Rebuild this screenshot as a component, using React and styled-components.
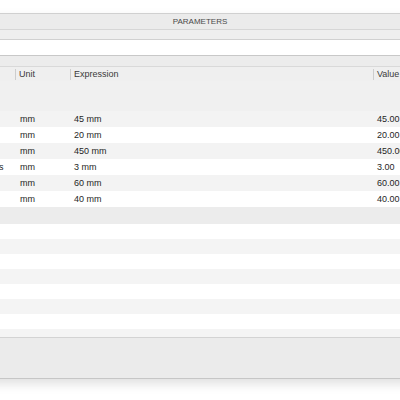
import React from "react";
import styled, { createGlobalStyle } from "styled-components";

const Global = createGlobalStyle`
  html, body { margin: 0; padding: 0; background: #ffffff; overflow: hidden; }
  body { font-family: "Liberation Sans", Arial, sans-serif; }
`;

const Page = styled.div`
  width: 400px;
  height: 400px;
  overflow: hidden;
  padding-top: 13px;
  box-sizing: border-box;
`;

const Panel = styled.div`
  margin-left: -120px;
  width: 640px;
  border-top: 1px solid #d0d0d0;
  box-shadow: 0 5px 10px rgba(0, 0, 0, 0.12);
  background: #f2f2f2;
`;

const TitleBar = styled.div`
  height: 15px;
  background: #ebebeb;
  border-bottom: 1px solid #d6d6d6;
  display: flex;
  align-items: center;
  justify-content: center;
  font-size: 8px;
  color: #4a4a4a;
`;

const Bar = styled.div`
  height: ${(p) => p.$h}px;
  background: ${(p) => p.$bg};
  border-bottom: 1px solid ${(p) => p.$line};
`;

const Grid = styled.div`
  display: grid;
  grid-template-columns: 79px 56px 55px 303px 1fr;
  align-items: center;
  height: ${(p) => p.$h}px;
  background: ${(p) => p.$bg};
  font-size: 9px;
  color: #1f1f1f;
`;

const HeaderCell = styled.div`
  border-left: ${(p) => (p.$sep ? "1px solid #cdcdcd" : "none")};
  padding-left: 3px;
  line-height: 11px;
  color: #3a3a3a;
  white-space: nowrap;
`;

const Cell = styled.div`
  padding-left: ${(p) => p.$pad || 4}px;
  white-space: nowrap;
  overflow: hidden;
`;

const Stripe = styled.div`
  height: ${(p) => p.$h}px;
  background: ${(p) => p.$bg};
`;

const Footer = styled.div`
  height: 40px;
  background: #ebebeb;
  border-top: 1px solid #d3d3d3;
  border-bottom: 1px solid #c6c6c6;
`;

const rows = [
  { name: "Length", unit: "mm", expr: "45 mm", value: "45.00" },
  { name: "Width", unit: "mm", expr: "20 mm", value: "20.00" },
  { name: "Height", unit: "mm", expr: "450 mm", value: "450.00" },
  { name: "Thickness", unit: "mm", expr: "3 mm", value: "3.00" },
  { name: "Depth", unit: "mm", expr: "60 mm", value: "60.00" },
  { name: "Radius", unit: "mm", expr: "40 mm", value: "40.00" },
];

const stripes = [
  ["#ffffff", 15],
  ["#f4f4f4", 15],
  ["#ffffff", 15],
  ["#f4f4f4", 15],
  ["#ffffff", 15],
  ["#f4f4f4", 15],
  ["#ffffff", 15],
  ["#f4f4f4", 8],
];

export default function App() {
  return (
    <>
      <Global />
      <Page>
        <Panel>
          <TitleBar>PARAMETERS</TitleBar>
          <Bar $h={9} $bg="#eeeeee" $line="#d0d0d0" />
          <Bar $h={15} $bg="#ffffff" $line="#c8c8c8" />
          <Bar $h={10} $bg="#ececec" $line="#d9d9d9" />
          <Grid $h={14} $bg="#efefef">
            <HeaderCell />
            <HeaderCell>Name</HeaderCell>
            <HeaderCell $sep>Unit</HeaderCell>
            <HeaderCell $sep>Expression</HeaderCell>
            <HeaderCell $sep>Value</HeaderCell>
          </Grid>
          <Stripe $h={30} $bg="#f0f0f0" />
          {rows.map((r, i) => (
            <Grid key={r.name} $h={16} $bg={i % 2 === 0 ? "#f3f3f3" : "#ffffff"}>
              <Cell />
              <Cell>{r.name}</Cell>
              <Cell $pad={5}>{r.unit}</Cell>
              <Cell>{r.expr}</Cell>
              <Cell>{r.value}</Cell>
            </Grid>
          ))}
          <Stripe $h={17} $bg="#ececec" />
          {stripes.map(([bg, h], i) => (
            <Stripe key={i} $h={h} $bg={bg} />
          ))}
          <Footer />
        </Panel>
      </Page>
    </>
  );
}
